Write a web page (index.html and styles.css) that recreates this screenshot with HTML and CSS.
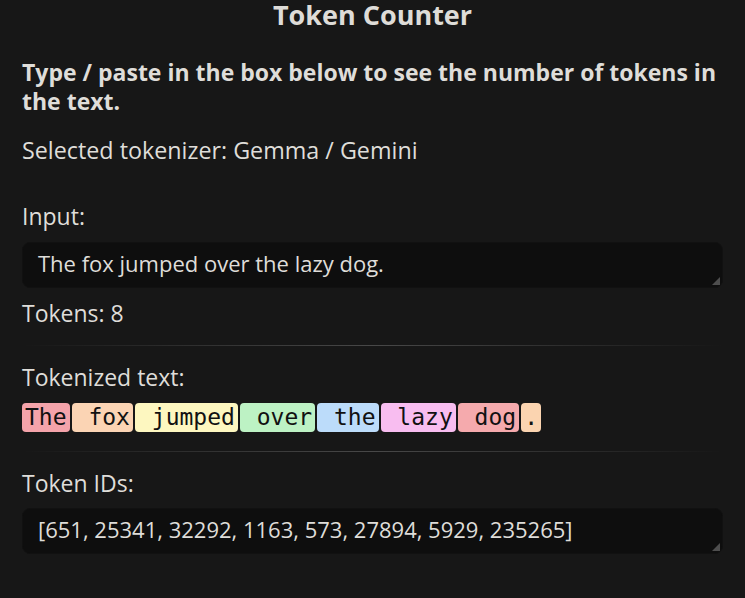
FILE: index.html
```html
<!DOCTYPE html>
<html lang="en">
<head>
  <meta charset="UTF-8">
  <title>Token Counter</title>
  <link rel="stylesheet" href="styles.css">
</head>
<body>
  <header>Token Counter</header>

  <!-- Intro -->
  <p class="intro">Type / paste in the box below to see the number of tokens in the text.</p>
  <p class="selected">Selected tokenizer: Gemma / Gemini</p>

  <!-- Input -->
  <section id="inputSection">
    <label for="inputText">Input:</label>
    <div class="field">
      <textarea id="inputText" rows="1">The fox jumped over the lazy dog.</textarea>
    </div>
    <div class="count">Tokens: <span id="tokenCount">8</span></div>
  </section>

  <hr>

  <!-- Tokenized text -->
  <section id="tokenSection">
    <div class="label">Tokenized text:</div>
    <div class="tokens" id="tokens">
      <span class="tok t0">The</span><span class="tok t1"> fox</span><span class="tok t2"> jumped</span><span class="tok t3"> over</span><span class="tok t4"> the</span><span class="tok t5"> lazy</span><span class="tok t6"> dog</span><span class="tok t7">.</span>
    </div>
  </section>

  <hr>

  <!-- Token IDs -->
  <section id="idSection">
    <label for="tokenIds">Token IDs:</label>
    <div class="field">
      <textarea id="tokenIds" rows="1" readonly>[651, 25341, 32292, 1163, 573, 27894, 5929, 235265]</textarea>
    </div>
  </section>
</body>
</html>
```

FILE: styles.css
```css
body {
  font-family: "Open Sans", "Noto Sans", sans-serif;
  background-color: #171717;
  color: #dfddd9;
  margin: 0;
  padding: 0 22px;
  font-size: 23px;
}
header {
  text-align: center;
  font-weight: bold;
  font-size: 27px;
  line-height: 30px;
  color: #dedcd8;
}
p {
  margin: 0;
}
.intro {
  font-weight: bold;
  line-height: 29px;
  margin-top: 28px;
}
.selected {
  margin-top: 20px;
  line-height: 29px;
  font-size: 23.3px;
}
section {
  display: flex;
  flex-direction: column;
}
#inputSection {
  margin-top: 37px;
}
label,
.label,
.count {
  line-height: 29px;
}
/* wrapper so the resize corner can be drawn on top */
.field {
  position: relative;
  margin-top: 11px;
}
.field::after {
  content: "";
  position: absolute;
  right: 3px;
  bottom: 3px;
  width: 0;
  height: 0;
  border-left: 8px solid transparent;
  border-bottom: 8px solid #4e4e4e;
}
textarea {
  display: block;
  width: 100%;
  font-family: inherit;
  font-size: 22px;
  color: #dfddd9;
  background-color: #0e0e0e;
  border: 1px solid #111;
  border-radius: 8px;
  padding: 6px 15px;
  margin: 0;
  height: 46px;
  box-sizing: border-box;
  line-height: 29px;
  resize: none;
  outline: none;
  overflow: hidden;
}
.count {
  margin-top: 11px;
}
hr {
  border: 0;
  height: 1px;
  margin: 17px 0;
  background: linear-gradient(to right, rgba(80, 80, 80, 0), #484848 50%, rgba(80, 80, 80, 0));
}
.tokens {
  display: flex;
  flex-wrap: wrap;
  gap: 2px;
  margin: 11px 0 2px;
}
/* each token gets its own pastel colour */
.tok {
  font-family: "DejaVu Sans Mono", monospace;
  font-size: 23px;
  line-height: 29px;
  color: #111;
  white-space: pre;
  border-radius: 4px;
  padding: 0 3px;
}
.t0 { background-color: #f4a3aa; }
.t1 { background-color: #fbd4b4; }
.t2 { background-color: #fdf7c0; }
.t3 { background-color: #bdf2c4; }
.t4 { background-color: #bcdcfa; }
.t5 { background-color: #f8bdf0; }
.t6 { background-color: #f5aaad; }
.t7 { background-color: #fbd4b0; }
#idSection .field {
  margin-top: 10px;
}
```
